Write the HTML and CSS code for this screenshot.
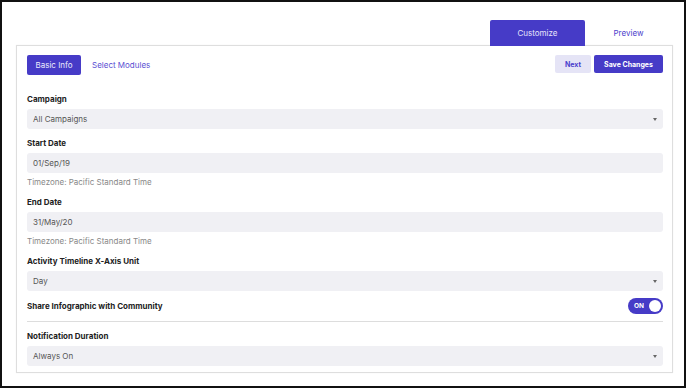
FILE: index.html
```html
<!DOCTYPE html>
<html lang="en">
<head>
    <meta charset="UTF-8">
    <meta name="viewport" content="width=device-width, initial-scale=1.0">
    <title>Infographic Settings</title>
    <link rel="stylesheet" href="styles.css">
</head>
<body>
    <div class="frame">
        <div class="tabs">
            <div class="tab active">Customize</div>
            <div class="tab">Preview</div>
        </div>
        <div class="panel">
            <div class="toolbar">
                <div class="steps">
                    <button class="btn btn-primary step">Basic Info</button>
                    <span class="step-link">Select Modules</span>
                </div>
                <div class="actions">
                    <button class="btn btn-light">Next</button>
                    <button class="btn btn-primary">Save Changes</button>
                </div>
            </div>

            <div class="group first">
                <label class="label">Campaign</label>
                <div class="field select">All Campaigns<span class="caret"></span></div>
            </div>

            <div class="group">
                <label class="label">Start Date</label>
                <div class="field">01/Sep/19</div>
                <div class="hint">Timezone: Pacific Standard Time</div>
            </div>

            <div class="group">
                <label class="label">End Date</label>
                <div class="field">31/May/20</div>
                <div class="hint">Timezone: Pacific Standard Time</div>
            </div>

            <div class="group">
                <label class="label">Activity Timeline X-Axis Unit</label>
                <div class="field select">Day<span class="caret"></span></div>
            </div>

            <div class="group switch-row">
                <label class="label">Share Infographic with Community</label>
                <div class="toggle"><span>ON</span><i class="knob"></i></div>
            </div>

            <hr class="divider">

            <div class="group">
                <label class="label">Notification Duration</label>
                <div class="field select">Always On<span class="caret"></span></div>
            </div>
        </div>
    </div>
</body>
</html>
```

FILE: styles.css
```css
body {
    margin: 0;
    font-family: Inter, "Noto Sans", sans-serif;
    background: #fff;
    color: #222;
}
.frame {
    border: 2px solid #111;
    padding: 18px 0 0 14px;
    width: 668px;
    height: 366px;
}
.tabs {
    display: flex;
    justify-content: flex-end;
    width: 656px;
    height: 26px;
    position: relative;
    z-index: 1;
    margin-bottom: -1px;
}
.tab {
    width: 87px;
    display: flex;
    align-items: center;
    justify-content: center;
    font-size: 8px;
    color: #4b40cc;
    border-radius: 2px 2px 0 0;
}
.tab.active {
    width: 95px;
    background: #463bc7;
    color: #e6e4fb;
}
.panel {
    width: 636px;
    border: 1px solid #dedede;
    padding: 9px 9px 6px 10px;
    box-shadow: 0 0 1px rgba(0, 0, 0, 0.08);
}
.toolbar {
    display: flex;
    justify-content: space-between;
    align-items: flex-start;
    height: 20px;
}
.steps {
    display: flex;
    align-items: center;
    gap: 11px;
}
.btn {
    font-family: inherit;
    border: none;
    border-radius: 2px;
    height: 18px;
    padding: 0;
    font-size: 7px;
    font-weight: 700;
    cursor: pointer;
}
.btn-primary {
    background: #463bc7;
    color: #fff;
}
.btn-light {
    background: #e5e4f6;
    color: #4b40cc;
    width: 36px;
}
.step {
    height: 20px;
    width: 54px;
    font-weight: 400;
    font-size: 8px;
    color: #ecebfc;
}
.step-link {
    font-size: 8px;
    color: #5a4fd2;
}
.actions {
    display: flex;
    gap: 3px;
}
.actions .btn-primary {
    width: 69px;
}
.group {
    margin-top: 8px;
}
.group.first {
    margin-top: 18px;
}
.label {
    display: block;
    font-size: 8px;
    font-weight: 700;
    line-height: 12px;
    color: #222;
    margin-bottom: 4px;
}
.field {
    position: relative;
    height: 20px;
    line-height: 20px;
    background: #f0f0f4;
    border-radius: 3px;
    padding: 0 6px;
    font-size: 8px;
    color: #555;
}
.caret {
    position: absolute;
    right: 6px;
    top: 9px;
    border-left: 2px solid transparent;
    border-right: 2px solid transparent;
    border-top: 3px solid #666;
}
.hint {
    margin-top: 3px;
    font-size: 8px;
    line-height: 12px;
    color: #888;
}
.switch-row {
    display: flex;
    justify-content: space-between;
    align-items: center;
    height: 16px;
    margin-top: 7px;
}
.switch-row .label {
    margin-bottom: 0;
}
.toggle {
    position: relative;
    width: 35px;
    height: 16px;
    border-radius: 8px;
    background: #463bc7;
}
.toggle span {
    position: absolute;
    left: 6px;
    top: 0;
    line-height: 16px;
    font-size: 6.5px;
    font-weight: 700;
    color: #fff;
}
.knob {
    position: absolute;
    right: 2px;
    top: 2px;
    width: 12px;
    height: 12px;
    border-radius: 50%;
    background: #fff;
}
.divider {
    border: none;
    border-top: 1px solid #ddd;
    margin: 7px 0 0;
}
```
